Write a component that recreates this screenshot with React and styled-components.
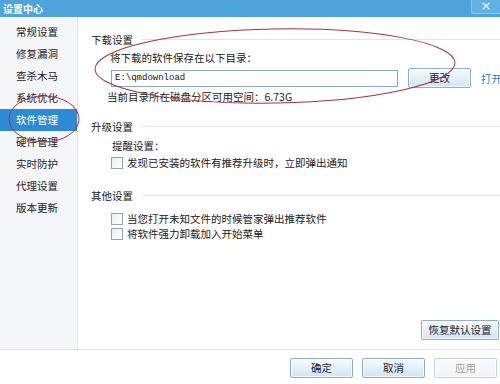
import styled, { createGlobalStyle, css } from "styled-components"

const Global = createGlobalStyle`
    html, body { margin: 0; padding: 0; background: #fff; }
    body { font-family: "Noto Sans CJK SC", "Liberation Sans", sans-serif; font-size: 10.5px; color: #222; }
`

const menu = ["常规设置", "修复漏洞", "查杀木马", "系统优化", "软件管理", "硬件管理", "实时防护", "代理设置", "版本更新"]

const App = () => {
    return (
        <Window>
            <Global />
            <TitleBar>
                <Title>设置中心</Title>
                <CloseBtn>×</CloseBtn>
            </TitleBar>
            <Body>
                <Sidebar>
                    {menu.map(m => (
                        <MenuItem key={m} active={m === "软件管理"}>{m}</MenuItem>
                    ))}
                </Sidebar>
                <Content>
                    <Heading>下载设置</Heading>
                    <Line indent={19} top={4}>将下载的软件保存在以下目录：</Line>
                    <PathRow>
                        <PathInput>E:\qmdownload</PathInput>
                        <Button>更改</Button>
                        <Link>打开</Link>
                    </PathRow>
                    <Line indent={16} top={2}>当前目录所在磁盘分区可用空间：6.73G</Line>

                    <Heading top={16}>升级设置</Heading>
                    <Line indent={21} top={5}>提醒设置：</Line>
                    <Check top={2}><Box />发现已安装的软件有推荐升级时，立即弹出通知</Check>

                    <Heading top={19}>其他设置</Heading>
                    <Check top={8}><Box />当您打开未知文件的时候管家弹出推荐软件</Check>
                    <Check><Box />将软件强力卸载加入开始菜单</Check>

                    <RestoreRow>
                        <Button wide>恢复默认设置</Button>
                    </RestoreRow>
                </Content>
            </Body>
            <Footer>
                <Button>确定</Button>
                <Button>取消</Button>
                <Button disabled>应用</Button>
            </Footer>
            <Marks width="500" height="384" viewBox="0 0 500 384">
                <ellipse cx="275" cy="66" rx="180" ry="37" fill="none" stroke="#a5323f" strokeWidth="1" transform="rotate(-1 275 66)" />
                <ellipse cx="44" cy="119" rx="35" ry="23" fill="none" stroke="#a5323f" strokeWidth="1" />
            </Marks>
        </Window>
    )
}

const Window = styled.div`
    position: relative;
    width: 500px;
    height: 384px;
    overflow: hidden;
    display: flex;
    flex-direction: column;
    background: #fff;
`

const TitleBar = styled.div`
    height: 17px;
    background: #4ea3dc;
    display: flex;
    align-items: center;
    justify-content: space-between;
    flex-shrink: 0;
`

const Title = styled.div`
    color: #fff;
    font-weight: bold;
    font-size: 10px;
    padding-left: 3px;
    line-height: 17px;
`

const CloseBtn = styled.div`
    align-self: flex-start;
    width: 28px;
    height: 13px;
    background: #62b0e4;
    border-left: 1px solid #8cc6ec;
    border-bottom: 1px solid #8cc6ec;
    border-radius: 0 0 0 3px;
    color: #fff;
    font-size: 13px;
    line-height: 12px;
    text-align: center;
    font-family: "DejaVu Sans", sans-serif;
`

const Body = styled.div`
    display: flex;
    height: 332px;
    border-bottom: 1px solid #e2e4e7;
`

const Sidebar = styled.div`
    width: 77px;
    background: #f4f6f9;
    border-right: 1px solid #e3e6ea;
    padding-top: 4px;
    flex-shrink: 0;
`

const MenuItem = styled.div`
    height: 22px;
    line-height: 22px;
    padding-left: 16px;
    color: #222;
    ${props => props.active && css`
        background: #2e8ad4;
        color: #fff;
    `}
`

const Content = styled.div`
    flex: 1;
    display: flex;
    flex-direction: column;
    padding: 16px 0 9px 13px;
`

const Heading = styled.div`
    display: flex;
    align-items: center;
    line-height: 14px;
    margin-top: ${props => props.top || 0}px;
    &::after {
        content: "";
        flex: 1;
        height: 1px;
        background: #e4e4e4;
        margin-left: 9px;
        margin-top: -2px;
    }
`

const Line = styled.div`
    line-height: 14px;
    padding-left: ${props => props.indent}px;
    margin-top: ${props => props.top || 0}px;
`

const PathRow = styled.div`
    display: flex;
    align-items: center;
    padding-left: 20px;
    margin-top: 3px;
    gap: 10px;
`

const PathInput = styled.div`
    width: 282px;
    height: 15px;
    border: 1px solid #8aa8c3;
    background: #fff;
    font-family: "Liberation Mono", monospace;
    font-size: 9px;
    line-height: 15px;
    padding-left: 3px;
    color: #111;
`

const Button = styled.button`
    width: ${props => props.wide ? 78 : 63}px;
    height: 20px;
    padding: 0;
    border: 1px solid ${props => props.disabled ? "#c3d3e0" : "#8eaecb"};
    border-radius: 2px;
    background: ${props => props.disabled
        ? "linear-gradient(#fbfcfd, #eef3f7)"
        : "linear-gradient(#f7fbfe, #e3f0fa 50%, #cfe4f5)"};
    color: ${props => props.disabled ? "#a0a0a0" : "#222"};
    font-family: "Noto Sans CJK SC", sans-serif;
    font-size: 10.5px;
    line-height: 18px;
    white-space: nowrap;
    box-shadow: inset 0 0 0 1px rgba(255,255,255,0.7);
`

const Link = styled.span`
    color: #2c7bc4;
    white-space: nowrap;
`

const Check = styled.div`
    display: flex;
    align-items: center;
    gap: 4px;
    padding-left: 20px;
    height: 15px;
    line-height: 15px;
    margin-top: ${props => props.top || 0}px;
`

const Box = styled.span`
    width: 10px;
    height: 10px;
    border: 1px solid #8ea4b8;
    background: linear-gradient(135deg, #e9eef3, #fff);
    flex-shrink: 0;
`

const RestoreRow = styled.div`
    margin-top: auto;
    display: flex;
    justify-content: flex-end;
    padding-right: 3px;
`

const Footer = styled.div`
    flex: 1;
    display: flex;
    justify-content: flex-end;
    align-items: flex-start;
    gap: 9px;
    padding: 8px 3px 0 0;
`

const Marks = styled.svg`
    position: absolute;
    left: 0;
    top: 0;
    pointer-events: none;
`

export default App
